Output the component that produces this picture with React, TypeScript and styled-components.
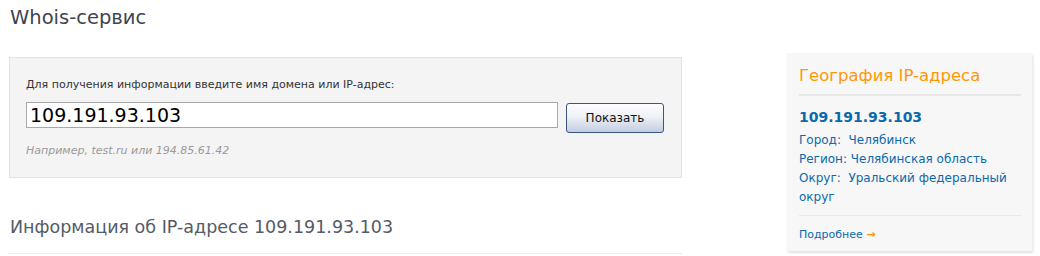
import * as React from 'react';
import styled, { createGlobalStyle } from 'styled-components';

const GlobalStyle = createGlobalStyle`
  html, body {
    margin: 0;
    padding: 0;
    background: #fff;
    font-family: 'DejaVu Sans', Verdana, sans-serif;
  }
`;

const Page = styled.div`
  display: flex;
  align-items: flex-start;
  padding: 0 8px 0 9px;
  width: 1040px;
  box-sizing: border-box;
`;

const Main = styled.div`
  width: 673px;
`;

const PageTitle = styled.h1`
  margin: 0;
  padding: 5px 0 0 1px;
  font-size: 19.5px;
  font-weight: normal;
  color: #3d4552;
  line-height: 26px;
  height: 52px;
`;

const SearchBox = styled.form`
  background: #f4f4f4;
  border: 1px solid #e3e3e3;
  padding: 19px 16px 20px 16px;
  height: 80px;
`;

const Label = styled.div`
  font-size: 11px;
  color: #333;
  line-height: 15px;
  margin-bottom: 10px;
`;

const InputRow = styled.div`
  display: flex;
  align-items: flex-start;
  gap: 8px;
`;

const Input = styled.input`
  width: 532px;
  height: 26px;
  box-sizing: border-box;
  border: 1px solid #a8a8a8;
  background: #fff;
  padding: 0 3px;
  font-family: 'DejaVu Sans', Verdana, sans-serif;
  font-size: 19px;
  color: #000;
  outline: none;
`;

const Button = styled.button`
  width: 98px;
  height: 30px;
  margin-top: 1px;
  border: 1px solid #3a5683;
  border-radius: 3px;
  background: linear-gradient(#fdfdfe 0%, #eef1f6 45%, #c3cde0 100%);
  font-family: 'DejaVu Sans', Verdana, sans-serif;
  font-size: 12px;
  color: #111;
  padding: 0;
`;

const Hint = styled.div`
  margin-top: 11px;
  font-size: 11px;
  font-style: italic;
  color: #9a9a9a;
`;

const Subtitle = styled.h2`
  margin: 38px 0 0;
  padding: 0 0 15px 1px;
  font-size: 17.5px;
  font-weight: normal;
  color: #555b66;
  line-height: 22px;
  border-bottom: 1px solid #ececec;
`;

const Sidebar = styled.aside`
  margin-left: 105px;
  margin-top: 53px;
  width: 245px;
  height: 198px;
  box-sizing: border-box;
  background: #f7f7f7;
  box-shadow: 1px 2px 3px rgba(0, 0, 0, 0.12);
  padding: 12px 11px 0 12px;
`;

const SideTitle = styled.div`
  font-size: 16.5px;
  color: #ff9705;
  line-height: 21px;
  padding-bottom: 8px;
  border-bottom: 2px solid #e8e8e8;
`;

const IpHeading = styled.div`
  margin-top: 12px;
  font-size: 14px;
  font-weight: bold;
  color: #0b69ad;
  line-height: 18px;
  margin-bottom: 5px;
`;

const InfoLine = styled.div`
  font-size: 12px;
  color: #0b69ad;
  line-height: 19px;
`;

const Divider = styled.div`
  margin-top: 8px;
  border-top: 1px solid #e8e8e8;
`;

const More = styled.a`
  display: block;
  margin-top: 12px;
  font-size: 11px;
  color: #0b69ad;
  text-decoration: none;
  line-height: 14px;
`;

const Arrow = styled.span`
  color: #f7961c;
  font-weight: bold;
`;

export default function App() {
  return (
    <>
      <GlobalStyle />
      <Page>
        <Main>
          <PageTitle>Whois-сервис</PageTitle>
          <SearchBox onSubmit={(e) => e.preventDefault()}>
            <Label>Для получения информации введите имя домена или IP-адрес:</Label>
            <InputRow>
              <Input defaultValue="109.191.93.103" />
              <Button type="submit">Показать</Button>
            </InputRow>
            <Hint>Например, test.ru или 194.85.61.42</Hint>
          </SearchBox>
          <Subtitle>Информация об IP-адресе 109.191.93.103</Subtitle>
        </Main>
        <Sidebar>
          <SideTitle>География IP-адреса</SideTitle>
          <IpHeading>109.191.93.103</IpHeading>
          <InfoLine>Город:&nbsp; Челябинск</InfoLine>
          <InfoLine>Регион: Челябинская область</InfoLine>
          <InfoLine>Округ:&nbsp; Уральский федеральный округ</InfoLine>
          <Divider />
          <More href="#">
            Подробнее <Arrow>→</Arrow>
          </More>
        </Sidebar>
      </Page>
    </>
  );
}
